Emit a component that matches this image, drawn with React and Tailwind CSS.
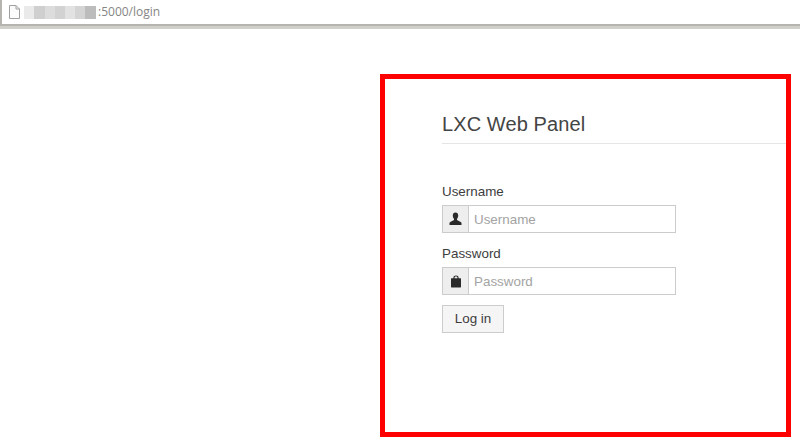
const font = { fontFamily: '"Liberation Sans", Arial, sans-serif' }

function Field({ label, placeholder, type, icon }) {
  return (
    <div className="flex flex-col">
      <label className="text-[13.4px] leading-[20px] text-[#3d3d3d] mb-[3px]">{label}</label>
      <div className="flex w-[234px] h-[28px] border border-[#ccc]">
        <span className="w-[26px] shrink-0 flex items-center justify-center bg-[#eee] border-r border-[#ccc]">
          {icon}
        </span>
        <input
          type={type}
          placeholder={placeholder}
          className="min-w-0 flex-1 px-[5px] pt-[2px] text-[13.4px] text-[#555] bg-white outline-none placeholder:text-[#a3a3a3]"
        />
      </div>
    </div>
  )
}

const UserIcon = (
  <svg width="13" height="14" viewBox="0 0 13 14" fill="#2a2a2a">
    <path d="M6.500 0.500c-1.700 0-2.700 1.200-2.700 3 0 1.300.4 2.500 1.200 3.300v1.300L1.300 10c-.6.200-.8.600-.8 1.100v2h12v-2c0-.5-.2-.9-.8-1.100L8 8.100V6.800c.8-.8 1.200-2 1.200-3.300 0-1.800-1-3-2.700-3z" />
  </svg>
)

const LockIcon = (
  <svg width="12" height="13" viewBox="0 0 12 13" fill="#2a2a2a">
    <path d="M3.400 3.200V2.500C3.400 1.200 4.500.5 6 .5s2.600.7 2.600 2v.7h1.900c.3 0 .5.2.5.5v8.300c0 .3-.2.500-.5.500h-9c-.3 0-.5-.2-.5-.5V3.700c0-.3.2-.5.5-.5h1.900zm1.200 0h2.800v-.7c0-.6-.5-.9-1.400-.9s-1.400.3-1.400.9v.7z" />
  </svg>
)

export default function App() {
  return (
    <div className="w-[800px] h-[445px] overflow-hidden bg-white" style={font}>
      {/* browser address bar */}
      <div className="h-[29px] border-b-[3px] border-[#d0cfc9] bg-white">
        <div className="h-[26px] border-l-2 border-b-2 border-[#b5b4ae] flex items-center pl-[6px]">
          <svg width="13" height="16" viewBox="0 0 13 16" fill="none" stroke="#a0a0a0" className="shrink-0">
            <path d="M1.500 1.500h6.500l3.500 3.500v9.500h-10z" fill="#fbfbfb" />
            <path d="M8 1.500v3.500h3.500" />
          </svg>
          <div className="ml-[3px] w-[72px] h-[13px] flex shrink-0">
            <span className="w-[10px] bg-[#eaeaea]" />
            <span className="w-[11px] bg-[#cfcfcf]" />
            <span className="w-[10px] bg-[#dcdcdc]" />
            <span className="w-[10px] bg-[#d2d2d2]" />
            <span className="w-[10px] bg-[#e2e2e2]" />
            <span className="w-[10px] bg-[#d4d4d4]" />
            <span className="w-[11px] bg-[#bcbcbc]" />
          </div>
          <span className="text-[12px] text-[#858585] ml-[2px]" style={{ fontFamily: '"Open Sans", sans-serif' }}>
            :5000/login
          </span>
        </div>
      </div>

      {/* highlighted login panel */}
      <div className="ml-[380px] mt-[45px] w-[411px] h-[363px] border-[5px] border-[#ff0000] pl-[57px] pt-[30px]">
        <h1 className="text-[20px] leading-[30px] text-[#444] tracking-[0.1px] border-b border-[#e5e5e5] pb-[4px] mb-[38px]">
          LXC Web Panel
        </h1>
        <div className="flex flex-col gap-[11px]">
          <Field label="Username" placeholder="Username" type="text" icon={UserIcon} />
          <Field label="Password" placeholder="Password" type="password" icon={LockIcon} />
          <button
            type="button"
            className="-mt-[1px] w-[62px] h-[28px] border border-[#ccc] bg-[#f5f5f5] text-[13.4px] text-[#3d3d3d]"
          >
            Log in
          </button>
        </div>
      </div>
    </div>
  )
}
